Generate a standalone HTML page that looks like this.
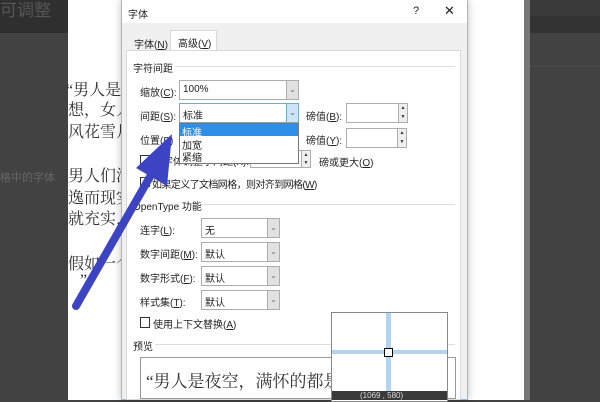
<!DOCTYPE html>
<html><head><meta charset="utf-8"><style>
*{margin:0;padding:0;box-sizing:border-box}
body{width:600px;height:400px;overflow:hidden;position:relative;background:#424242;font-family:"Liberation Sans","Noto Sans CJK SC",sans-serif;font-size:10px;color:#222}
.a{position:absolute;white-space:nowrap}
.combo{position:absolute;background:#fff;border:1px solid #adadad;height:20px;font-size:10px;padding:3px 3px}
.combo .ar{position:absolute;right:0;top:0;width:12px;height:18px;background:#e1e1e1;border-left:1px solid #adadad;color:#666;font-size:8px;text-align:center;line-height:18px}
.spin{position:absolute;background:#fff;border:1px solid #adadad;height:20px}
.spin .s{position:absolute;right:0;top:0;width:9px;height:18px;background:#eee;border-left:1px solid #adadad;font-size:5px;text-align:center;line-height:9px;color:#333}
.cb{position:absolute;width:10px;height:10px;border:1px solid #333;background:#fff}
.serif{font-family:"Liberation Serif","Noto Serif CJK SC",serif;font-size:16px;color:#333}
</style></head><body>
<div class="a" style="left:0;top:0;width:68px;height:33px;background:#2f2f2f"></div>
<div class="a" style="left:0;top:-4px;font-size:17px;color:#555">可调整</div>
<div class="a" style="left:530px;top:0;width:70px;height:16px;background:#3a3a3a"></div>
<div class="a" style="left:530px;top:16px;width:70px;height:17px;background:#333"></div>
<div class="a" style="left:530px;top:66px;width:70px;height:1px;background:#4c4c4c"></div>
<div class="a" style="left:0;top:169px;font-size:11px;color:#666">格中的字体</div>
<div class="a" style="left:68px;top:0;width:456px;height:400px;background:#fff"></div>
<div class="a" style="left:524px;top:0;width:6px;height:400px;background:#777"></div>
<div class="a serif" style="left:66px;top:77px">“男人是</div>
<div class="a serif" style="left:68px;top:97px">想，女人</div>
<div class="a serif" style="left:68px;top:119px">风花雪月</div>
<div class="a serif" style="left:68px;top:163px">男人们涌</div>
<div class="a serif" style="left:68px;top:185px">逸而现实</div>
<div class="a serif" style="left:68px;top:206px">就充实，</div>
<div class="a serif" style="left:68px;top:251px">假如一个</div>
<div class="a serif" style="left:80px;top:272px">”</div>
<!-- dialog -->
<div class="a" style="left:121px;top:0;width:347px;height:400px;background:#f0f0f0;border:1px solid #9cb8d8;border-top:none;box-shadow:0 0 8px rgba(0,0,0,.25)"></div>
<div class="a" style="left:122px;top:0;width:345px;height:23px;background:#fff"></div>
<div class="a" style="left:128px;top:6px">字体</div>
<div class="a" style="left:413px;top:5px;font-size:11px">?</div>
<div class="a" style="left:444px;top:3px;font-size:13px">✕</div>
<div class="a" style="left:170px;top:30px;width:47px;height:21px;background:#fff;border:1px solid #d9d9d9;border-bottom:none"></div>
<div class="a" style="left:134px;top:36px">字体(<u>N</u>)</div>
<div class="a" style="left:178px;top:35px">高级(<u>V</u>)</div>
<div class="a" style="left:126px;top:50px;width:335px;height:350px;background:#fff;border:1px solid #d9d9d9"></div>
<div class="a" style="left:133px;top:60px">字符间距</div>
<div class="a" style="left:175px;top:66px;width:280px;height:1px;background:#ddd"></div>
<div class="a" style="left:140px;top:84px">缩放(<u>C</u>):</div>
<div class="combo" style="left:179px;top:80px;width:120px">100%<div class="ar">⌄</div></div>
<div class="a" style="left:140px;top:108px">间距(<u>S</u>):</div>
<div class="combo" style="left:179px;top:103px;width:120px;border-color:#7ab">标准<div class="ar" style="background:#cce4f7;border-color:#7ab">⌄</div></div>
<div class="a" style="left:306px;top:108px">磅值(<u>B</u>):</div>
<div class="spin" style="left:346px;top:103px;width:62px"><div class="s">▲<br>▼</div></div>
<div class="a" style="left:140px;top:132px">位置(P)</div>
<div class="a" style="left:306px;top:132px">磅值(<u>Y</u>):</div>
<div class="spin" style="left:346px;top:128px;width:61px"><div class="s">▲<br>▼</div></div>
<div class="cb" style="left:140px;top:155px"></div>
<div class="a" style="left:153px;top:153px">为字体调整字间距(K):</div>
<div class="spin" style="left:250px;top:150px;width:61px;height:18px"><div class="s" style="height:16px;line-height:8px">▲<br>▼</div></div>
<div class="a" style="left:319px;top:154px">磅或更大(<u>O</u>)</div>
<div class="cb" style="left:140px;top:177px"></div>
<div class="a" style="left:152px;top:176px;letter-spacing:-0.6px">如果定义了文档网格，则对齐到网格(<u>W</u>)</div>
<div class="a" style="left:133px;top:198px">OpenType 功能</div>
<div class="a" style="left:203px;top:204px;width:252px;height:1px;background:#ddd"></div>
<div class="a" style="left:140px;top:222px">连字(<u>L</u>):</div>
<div class="combo" style="left:201px;top:218px;width:79px">无<div class="ar">⌄</div></div>
<div class="a" style="left:140px;top:246px">数字间距(<u>M</u>):</div>
<div class="combo" style="left:201px;top:242px;width:79px">默认<div class="ar">⌄</div></div>
<div class="a" style="left:140px;top:270px">数字形式(<u>F</u>):</div>
<div class="combo" style="left:201px;top:266px;width:79px">默认<div class="ar">⌄</div></div>
<div class="a" style="left:140px;top:294px">样式集(<u>T</u>):</div>
<div class="combo" style="left:201px;top:290px;width:79px">默认<div class="ar">⌄</div></div>
<div class="cb" style="left:140px;top:317px;width:10px;height:11px"></div>
<div class="a" style="left:153px;top:316px">使用上下文替换(<u>A</u>)</div>
<div class="a" style="left:133px;top:338px">预览</div>
<div class="a" style="left:155px;top:344px;width:300px;height:1px;background:#ddd"></div>
<div class="a" style="left:140px;top:357px;width:316px;height:42px;border:1px solid #999;background:#fff"></div>
<div class="a serif" style="left:146px;top:367px;font-size:17px">“男人是夜空，满怀的都是</div>
<!-- dropdown list -->
<div class="a" style="left:179px;top:123px;width:120px;height:41px;background:#fff;border:1px solid #777"></div>
<div class="a" style="left:180px;top:124px;width:118px;height:12px;background:#2f8ee6"></div>
<div class="a" style="left:182px;top:124px;color:#fff">标准</div>
<div class="a" style="left:182px;top:137px">加宽</div>
<div class="a" style="left:182px;top:149px">紧缩</div>
<!-- magnifier -->
<div class="a" style="left:331px;top:312px;width:117px;height:90px;background:#fff;border:1px solid #888"></div>
<div class="a" style="left:386px;top:313px;width:5px;height:80px;background:#b5d3ee"></div>
<div class="a" style="left:332px;top:350px;width:115px;height:4px;background:#b5d3ee"></div>
<div class="a" style="left:384px;top:348px;width:9px;height:9px;border:1px solid #000;background:#fff"></div>
<div class="a" style="left:332px;top:391px;width:115px;height:9px;background:#3a3a3a"></div>
<div class="a" style="left:360px;top:392px;color:#ddd;font-size:8px;line-height:8px">(1069 , 580)</div>
<!-- arrow -->
<svg class="a" style="left:0;top:0" width="600" height="400">
<line x1="76" y1="306" x2="151" y2="175" stroke="#3d44c4" stroke-width="8" stroke-linecap="round"/>
<polygon points="172,134 136,168 167,186" fill="#3d44c4"/>
</svg>
</body></html>
